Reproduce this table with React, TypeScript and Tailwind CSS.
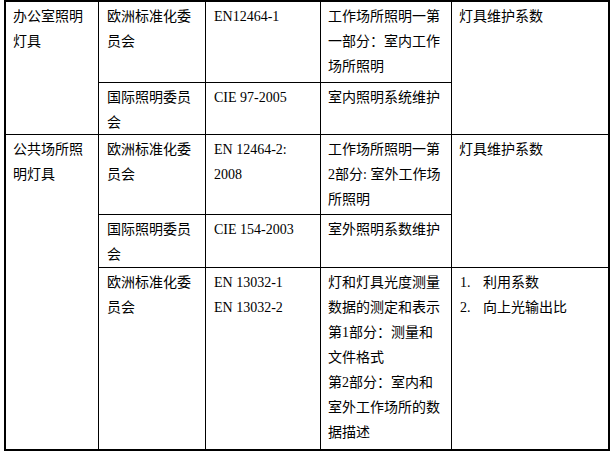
import React from 'react';

const font = { fontFamily: '"Liberation Serif", "Noto Sans CJK SC", serif' };

function Lines({ lines }: { lines: string[] }) {
  return (
    <>
      {lines.map((l, i) => (
        <div key={i} className="whitespace-nowrap">
          {l}
        </div>
      ))}
    </>
  );
}

function Cell({ className = '', children }: { className?: string; children: React.ReactNode }) {
  return <div className={`bg-white pl-[7px] pt-[2px] ${className}`}>{children}</div>;
}

export default function App() {
  return (
    <div className="min-h-screen bg-white pl-[4px]" style={font}>
      <div className="grid w-[606px] grid-cols-[92px_106px_114px_130px_156px] grid-rows-[80px_51px_79px_52px_181px] gap-px bg-black p-[2px] text-[14px] leading-[25px] text-black">
        {/* 办公室照明灯具 */}
        <Cell className="row-span-2">
          <Lines lines={['办公室照明', '灯具']} />
        </Cell>
        <Cell className="pl-[8px]">
          <Lines lines={['欧洲标准化委', '员会']} />
        </Cell>
        <Cell className="pl-[8px]">
          <Lines lines={['EN12464-1']} />
        </Cell>
        <Cell className="pl-[7px]">
          <Lines lines={['工作场所照明一第', '一部分：室内工作', '场所照明']} />
        </Cell>
        <Cell className="row-span-2 pl-[6px]">
          <Lines lines={['灯具维护系数']} />
        </Cell>

        <Cell className="pl-[8px]">
          <Lines lines={['国际照明委员', '会']} />
        </Cell>
        <Cell className="pl-[8px]">
          <Lines lines={['CIE 97-2005']} />
        </Cell>
        <Cell className="pl-[7px]">
          <Lines lines={['室内照明系统维护']} />
        </Cell>

        {/* 公共场所照明灯具 */}
        <Cell className="row-span-3">
          <Lines lines={['公共场所照', '明灯具']} />
        </Cell>
        <Cell className="pl-[8px]">
          <Lines lines={['欧洲标准化委', '员会']} />
        </Cell>
        <Cell className="pl-[8px]">
          <Lines lines={['EN 12464-2:', '2008']} />
        </Cell>
        <Cell className="pl-[7px]">
          <Lines lines={['工作场所照明一第', '2部分: 室外工作场', '所照明']} />
        </Cell>
        <Cell className="row-span-2 pl-[6px]">
          <Lines lines={['灯具维护系数']} />
        </Cell>

        <Cell className="pl-[8px]">
          <Lines lines={['国际照明委员', '会']} />
        </Cell>
        <Cell className="pl-[8px]">
          <Lines lines={['CIE 154-2003']} />
        </Cell>
        <Cell className="pl-[7px]">
          <Lines lines={['室外照明系数维护']} />
        </Cell>

        <Cell className="pl-[8px]">
          <Lines lines={['欧洲标准化委', '员会']} />
        </Cell>
        <Cell className="pl-[8px]">
          <Lines lines={['EN 13032-1', 'EN 13032-2']} />
        </Cell>
        <Cell className="pl-[7px]">
          <Lines
            lines={[
              '灯和灯具光度测量',
              '数据的测定和表示',
              '第1部分：测量和',
              '文件格式',
              '第2部分：室内和',
              '室外工作场所的数',
              '据描述',
            ]}
          />
        </Cell>
        <Cell className="pl-[8px]">
          {['利用系数', '向上光输出比'].map((t, i) => (
            <div key={t} className="flex whitespace-nowrap">
              <span className="w-[23px]">{i + 1}.</span>
              <span>{t}</span>
            </div>
          ))}
        </Cell>
      </div>
    </div>
  );
}
